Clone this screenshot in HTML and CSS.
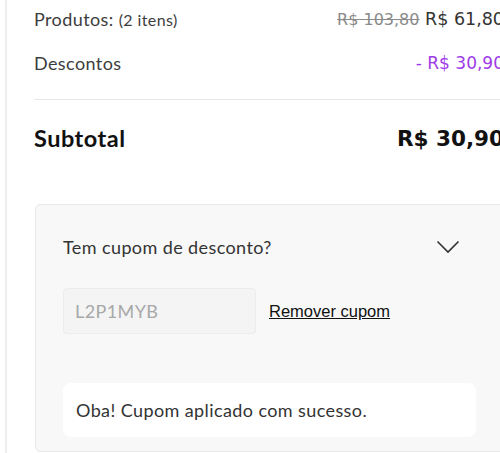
FILE: index.html
```html
<!DOCTYPE html>
<html lang="pt-BR">
<head>
<meta charset="utf-8">
<link rel="stylesheet" href="styles.css">
</head>
<body>
<div class="page">
  <div class="summary">
    <div class="row first">
      <span class="label">Produtos: <small>(2 itens)</small></span>
      <span class="value"><s class="old">R$ 103,80</s> R$ 61,80</span>
    </div>
    <div class="row second">
      <span class="label">Descontos</span>
      <span class="value discount">- R$ 30,90</span>
    </div>
    <div class="divider"></div>
    <div class="row total">
      <span class="label">Subtotal</span>
      <span class="value">R$ 30,90</span>
    </div>
    <div class="coupon">
      <div class="coupon-head">
        <span>Tem cupom de desconto?</span>
        <svg class="chevron" width="24" height="14" viewBox="0 0 24 14"><path d="M1.5 1.5 L12 12 L22.5 1.5" fill="none" stroke="#333" stroke-width="1.6"/></svg>
      </div>
      <div class="coupon-form">
        <div class="coupon-input">L2P1MYB</div>
        <a class="remove" href="#">Remover cupom</a>
      </div>
      <div class="success">Oba! Cupom aplicado com sucesso.</div>
    </div>
  </div>
</div>
</body>
</html>
```
FILE: styles.css
```css
html, body {
  margin: 0;
  padding: 0;
  background: #fff;
  overflow: hidden;
}
body {
  font-family: "Lato", "Noto Sans", sans-serif;
  color: #3d3d3d;
  letter-spacing: 0.4px;
}
.page {
  margin-left: 5px;
  border-left: 2px solid #eeeeee;
  padding-left: 27px;
  height: 453px;
  box-sizing: border-box;
}
.summary {
  width: 470px;
  padding-top: 7px;
}
.row {
  display: flex;
  justify-content: space-between;
  align-items: center;
  height: 24px;
}
.label {
  font-size: 18px;
}
.label small {
  font-size: 16px;
}
.value {
  font-family: "DejaVu Sans", "Open Sans", sans-serif;
  font-size: 17.5px;
  letter-spacing: 0;
  color: #333;
  white-space: nowrap;
}
.old {
  color: #8a8a8a;
  font-size: 16px;
}
.second {
  margin-top: 20px;
}
.discount {
  color: #a03be8;
  font-size: 17px;
}
.divider {
  margin-top: 24px;
  height: 1px;
  background: #e6e6e6;
  margin-right: -40px;
}
.total {
  margin-top: 23px;
  height: 30px;
}
.total .label {
  font-size: 23.5px;
  font-weight: 700;
  letter-spacing: 0.5px;
  color: #111;
}
.total .value {
  font-size: 21.5px;
  font-weight: 700;
  color: #111;
}
.coupon {
  margin-top: 51px;
  margin-left: 1px;
  background: #f8f8f8;
  border: 1px solid #e8e8e8;
  border-radius: 5px;
  padding: 30px 27px 14px 27px;
}
.coupon-head {
  display: flex;
  justify-content: space-between;
  align-items: center;
  height: 24px;
  font-size: 18px;
  color: #333;
}
.chevron {
  margin-right: 16px;
  display: block;
}
.coupon-form {
  display: flex;
  align-items: center;
  gap: 13px;
  margin-top: 29px;
}
.coupon-input {
  width: 193px;
  height: 46px;
  box-sizing: border-box;
  border: 1px solid #ececec;
  border-radius: 4px;
  background: #f4f4f4;
  color: #a8a8a8;
  font-size: 18px;
  padding-left: 11px;
  display: flex;
  align-items: center;
}
.remove {
  font-family: "Liberation Sans", Arial, sans-serif;
  font-size: 16.5px;
  letter-spacing: 0;
  color: #111;
  text-decoration: underline;
}
.success {
  margin-top: 49px;
  background: #fff;
  border-radius: 8px;
  height: 54px;
  display: flex;
  align-items: center;
  padding-left: 13px;
  font-size: 18px;
  color: #333;
}
```
